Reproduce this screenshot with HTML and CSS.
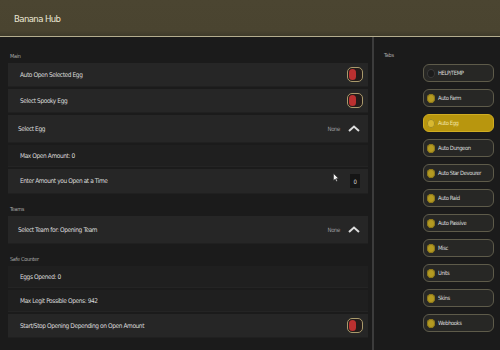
FILE: index.html
```html
<!DOCTYPE html>
<html lang="en">
<head>
  <meta charset="UTF-8">
  <title>Banana Hub</title>
  <link rel="stylesheet" href="styles.css">
</head>
<body>
<div class="window">
  <!-- Title bar -->
  <div class="header">Banana Hub</div>

  <div class="main">
    <!-- Options -->
    <div class="options">
      <div class="section">
        <div class="section-label">Main</div>
        <div class="row">
          <span>Auto Open Selected Egg</span>
          <span class="toggle"><span class="knob"></span></span>
        </div>
        <div class="row">
          <span>Select Spooky Egg</span>
          <span class="toggle"><span class="knob"></span></span>
        </div>
        <div class="row dropdown">
          <span>Select Egg</span>
          <span class="pick">None
            <svg class="chevron" width="12" height="7" viewBox="0 0 12 7"><polyline points="1,6 6,1.5 11,6" fill="none" stroke="#dcdcdc" stroke-width="2"/></svg>
          </span>
        </div>
        <div class="row label-row">Max Open Amount: 0</div>
        <div class="row input-row">
          <span>Enter Amount you Open at a Time</span>
          <svg class="cursor" width="6" height="9" viewBox="0 0 6 9"><path d="M0.5 0.5 L0.5 7.5 L2.2 6 L3.4 8.6 L4.4 8.1 L3.3 5.6 L5.5 5.5 Z" fill="#f2f2f2" stroke="#222" stroke-width="0.5"/></svg>
          <span class="amount">0</span>
        </div>
      </div>

      <div class="section">
        <div class="section-label">Teams</div>
        <div class="row dropdown">
          <span>Select Team for: Opening Team</span>
          <span class="pick">None
            <svg class="chevron" width="12" height="7" viewBox="0 0 12 7"><polyline points="1,6 6,1.5 11,6" fill="none" stroke="#dcdcdc" stroke-width="2"/></svg>
          </span>
        </div>
      </div>

      <div class="section">
        <div class="section-label">Safe Counter</div>
        <div class="row label-row">Eggs Opened: 0</div>
        <div class="row label-row">Max Legit Possible Opens: 942</div>
        <div class="row">
          <span>Start/Stop Opening Depending on Open Amount</span>
          <span class="toggle"><span class="knob"></span></span>
        </div>
      </div>
    </div>

    <!-- Tabs -->
    <div class="tabs">
      <div class="section-label">Tabs</div>
      <div class="tab-list">
        <div class="tab"><span class="dot dark"></span>HELP/TEMP</div>
        <div class="tab"><span class="dot"></span>Auto Farm</div>
        <div class="tab active"><span class="dot"></span>Auto Egg</div>
        <div class="tab"><span class="dot"></span>Auto Dungeon</div>
        <div class="tab"><span class="dot"></span>Auto Star Devourer</div>
        <div class="tab"><span class="dot"></span>Auto Raid</div>
        <div class="tab"><span class="dot"></span>Auto Passive</div>
        <div class="tab"><span class="dot"></span>Misc</div>
        <div class="tab"><span class="dot"></span>Units</div>
        <div class="tab"><span class="dot"></span>Skins</div>
        <div class="tab"><span class="dot"></span>Webhooks</div>
      </div>
    </div>
  </div>
</div>
</body>
</html>
```

FILE: styles.css
```css
body, html {
  margin: 0;
  padding: 0;
  background: #1b1b1b;
  font-family: "Liberation Sans Narrow", "DejaVu Sans Condensed", "Liberation Sans", sans-serif;
  color: #dcdcdc;
}

.window {
  width: 500px;
  height: 350px;
  display: flex;
  flex-direction: column;
  overflow: hidden;
}

.header {
  height: 37px;
  flex: none;
  box-sizing: border-box;
  padding-left: 14px;
  display: flex;
  align-items: center;
  font-size: 9.5px;
  letter-spacing: -0.6px;
  color: #ebe7d4;
  background: linear-gradient(#4b4531 0%, #4a4430 85%, #3f3b2b 100%);
  border-bottom: 1px solid #b4ad8e;
}

.main {
  flex: 1;
  display: flex;
}

.options {
  width: 372px;
  box-sizing: border-box;
  padding: 15px 4px 0 8px;
  display: flex;
  flex-direction: column;
  gap: 11px;
}

.section {
  display: flex;
  flex-direction: column;
  gap: 2px;
}

.section-label {
  height: 9px;
  line-height: 9px;
  font-size: 5.5px;
  letter-spacing: -0.3px;
  color: #a8a8a8;
  padding-left: 2px;
}

.row {
  height: 24px;
  flex: none;
  box-sizing: border-box;
  padding: 0 5px 0 12px;
  display: flex;
  align-items: center;
  justify-content: space-between;
  background: #262626;
  border-bottom: 1px solid #202020;
  font-size: 6.5px;
  letter-spacing: -0.4px;
  position: relative;
}

.dropdown {
  height: 28px;
  padding-left: 10px;
}

.label-row {
  height: 22px;
  background: #1f1f1f;
  border-bottom: 1px solid #242424;
}

.input-row {
  height: 25px;
}

.toggle {
  width: 16px;
  height: 15px;
  box-sizing: border-box;
  border: 1px solid #a99a6c;
  border-radius: 5px;
  background: #241c1a;
  display: flex;
  align-items: center;
  padding-left: 1px;
}

.knob {
  width: 7px;
  height: 11px;
  border-radius: 4px;
  background: #bb3030;
}

.pick {
  display: flex;
  align-items: center;
  gap: 8px;
  color: #9a9a9a;
  font-size: 6px;
}

.chevron {
  margin-right: 3px;
}

.amount {
  width: 10px;
  height: 14px;
  background: #151515;
  display: flex;
  align-items: center;
  justify-content: center;
  margin-right: 3px;
  font-size: 6px;
}

.cursor {
  position: absolute;
  left: 325px;
  top: 4px;
}

.tabs {
  flex: 1;
  border-left: 2px solid #3c3c3c;
  padding: 14px 6px 0 8px;
  display: flex;
  flex-direction: column;
}

.tab-list {
  margin-top: 4px;
  display: flex;
  flex-direction: column;
  align-items: flex-end;
  gap: 7px;
}

.tab {
  width: 71px;
  height: 18px;
  box-sizing: border-box;
  border: 1px solid #5e5b4a;
  border-radius: 6px;
  background: #272725;
  display: flex;
  align-items: center;
  gap: 3px;
  padding-left: 3px;
  font-size: 5.8px;
  letter-spacing: -0.4px;
  color: #dedede;
}

.tab.active {
  background: #b8960e;
  border-color: #d0ad22;
  color: #f3e6a8;
}

.dot {
  width: 8px;
  height: 9px;
  border-radius: 50%;
  background: #b49a22;
  box-shadow: inset 0 0 0 1px #8a761a;
}

.dot.dark {
  background: #1c1c1c;
  box-shadow: inset 0 0 0 1px #3a3a3a;
}

.tab.active .dot {
  background: #d8b830;
  box-shadow: inset 0 0 0 1px #a08a20;
}
```
